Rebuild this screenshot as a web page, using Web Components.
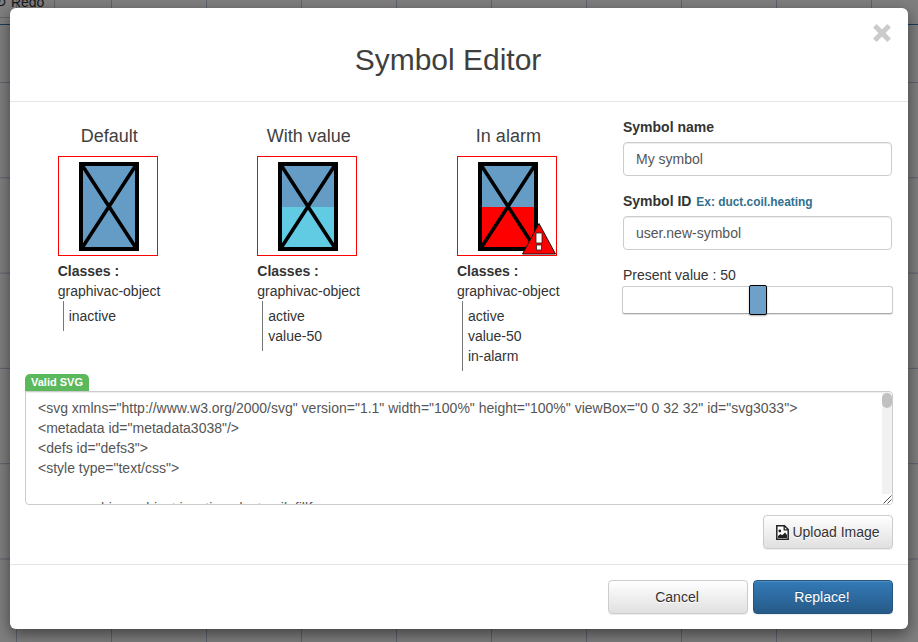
<!DOCTYPE html>
<html><head><meta charset="utf-8"><style>
html,body{margin:0;height:100%;overflow:hidden}
body{font:14px/20px "Liberation Sans",Arial,sans-serif;color:#333;background:#fff}
</style></head><body>
<template id="t-backdrop"><style>
:host{display:block;position:absolute;inset:0;overflow:hidden;background:#fff}
.bar{position:absolute;left:0;top:-14px;right:0;height:38px;border-bottom:1px solid #337ab7;font-size:14px}
.redo{position:absolute;left:-5px;top:0;border:1px solid #ccc;height:30px;line-height:30px;width:59px;border-left:0;white-space:nowrap}
.grid{position:absolute;inset:0;background-image:linear-gradient(to right,#b9c4e0 1px,transparent 1px),linear-gradient(to bottom,#b9c4e0 1px,transparent 1px);background-size:95px 95.3px;background-position:16px 82px}
.shade{position:absolute;inset:0;background:rgba(0,0,0,.5)}
</style><div class="grid"></div><div class="bar"><div class="redo">↻ Redo</div></div><div class="shade"></div></template>

<template id="t-modal"><style>
:host{display:flex;flex-direction:column;position:absolute;left:10px;top:8px;width:898px;height:621px;box-sizing:border-box;background:#fff;border-radius:6px;box-shadow:0 5px 15px rgba(0,0,0,.5)}
header{height:94px;box-sizing:border-box;border-bottom:1px solid #e5e5e5;display:flex;align-items:center;justify-content:center;position:relative;flex:none}
h3{margin:9px 22px 0 0;font-size:30px;font-weight:500;line-height:33px;color:#3f3f3f}
.close{position:absolute;right:17px;top:16px;opacity:.2}
.close svg{display:block;width:18px;height:18px}
main{flex:1;padding:15px;min-height:0}
footer{flex:none;height:65px;box-sizing:border-box;border-top:1px solid #e5e5e5;padding:15px;display:flex;justify-content:flex-end;gap:5px}
</style><header><h3>Symbol Editor</h3><div class="close" aria-hidden="true"><svg viewBox="0 0 18 18"><path d="M3.600 3.600 14.400 14.400M14.400 3.600 3.600 14.400" stroke="#000" stroke-width="5" stroke-linecap="square" fill="none"/></svg></div></header><main><slot></slot></main><footer><slot name="footer"></slot></footer></template>

<template id="t-preview"><style>
:host{display:block;width:100px;flex:none}
h4{margin:0 0 10px;padding:1px 0 0 3px;font-size:18px;font-weight:500;line-height:20px;text-align:center;white-space:nowrap;color:#3f3f3f}
.box{width:100px;height:100px;box-sizing:border-box;border:1px solid #f00;position:relative;overflow:hidden}
svg.sym{position:absolute;left:20px;top:5px;width:60px;height:89px;display:block}
svg.al{position:absolute;right:0;bottom:0;width:34px;height:32px;display:block}
.cl{margin-top:5px;white-space:nowrap}
b{font-weight:700;display:block}
.list{margin:0 0 0 5px;padding:5px 0 5px 5px;border-left:1px solid #777;white-space:nowrap;display:block}
</style><h4></h4><div class="box"><svg class="sym" viewBox="0 0 60 89"><rect x="2" y="2" width="56" height="85" fill="#659cc5"/><rect class="fill" x="2" y="45" width="56" height="42" fill="none"/><path d="M3 3 57 86M57 3 3 86" stroke="#000" stroke-width="3.6" fill="none"/><rect x="2" y="2" width="56" height="85" fill="none" stroke="#000" stroke-width="4"/></svg></div><div class="cl"><b>Classes :</b>graphivac-object<div class="list"><slot></slot></div></div></template>

<template id="t-field"><style>
:host{display:block;margin-bottom:15px}
label{display:block;font-weight:700;margin-bottom:4px;line-height:20px}
small{font-size:11.9px;font-weight:700;color:#31708f;margin-left:1px}
.in{height:34px;box-sizing:border-box;border:1px solid #ccc;border-radius:4px;box-shadow:inset 0 1px 1px rgba(0,0,0,.075);padding:6px 12px;line-height:20px;color:#555;background:#fff}
</style><label><span class="l"></span> <small></small></label><div class="in"></div></template>

<template id="t-slider"><style>
:host{display:block}
.lb{line-height:20px}
.track{position:relative;height:28px;margin:1px 0 0 -1px;width:271px;box-sizing:border-box;border:1px solid #ccc;border-bottom-color:#aaa;border-radius:3px;background:#fff;box-shadow:0 1px 1px rgba(0,0,0,.12)}
.thumb{position:absolute;left:126px;top:-2px;width:18px;height:30px;box-sizing:border-box;background:#6ea0c9;border:1px solid #000;border-radius:2px;box-shadow:0 1px 2px rgba(0,0,0,.3)}
</style><div class="lb">Present value : 50</div><div class="track"><div class="thumb"></div></div></template>

<template id="t-code"><style>
:host{display:block;position:relative;margin-top:3px}
.badge{display:block;width:fit-content;box-sizing:border-box;height:17px;padding:0 6px;line-height:16px;font-size:11px;font-weight:700;color:#fff;background:#5cb85c;border-radius:5px 5px 0 0}
.ta{height:114px;box-sizing:border-box;border:1px solid #ccc;border-radius:0 4px 4px 4px;padding:0 12px;position:relative;overflow:hidden;box-shadow:inset 0 1px 1px rgba(0,0,0,.075)}
pre{margin:0;padding-top:6px;font:inherit;color:#555;white-space:pre;line-height:20px}
.sb{position:absolute;top:0;right:0;width:10px;bottom:10px;background:#f1f1f1}
.th{position:absolute;left:0;top:1px;width:10px;height:15px;background:#c1c1c1;border-radius:5px}
.rz{position:absolute;right:0;bottom:0;width:10px;height:10px;background:#fff}
.rz svg{display:block}
</style><span class="badge">Valid SVG</span><div class="ta"><pre>&lt;svg xmlns="http://www.w3.org/2000/svg" version="1.1" width="100%" height="100%" viewBox="0 0 32 32" id="svg3033"&gt;
&lt;metadata id="metadata3038"/&gt;
&lt;defs id="defs3"&gt;
&lt;style type="text/css"&gt;

        .graphivac-object.inactive .duct-coil .fill{</pre><div class="sb"><div class="th"></div></div><div class="rz"><svg width="10" height="10" viewBox="0 0 10 10"><path d="M1.500 9.500 9.500 1.500M5.500 9.500 9.500 5.500" stroke="#555" fill="none"/></svg></div></div></template>

<template id="t-btn"><style>
:host{display:inline-block}
.b{display:flex;align-items:center;justify-content:center;gap:3px;box-sizing:border-box;height:34px;border:1px solid #ccc;border-radius:4px;background:linear-gradient(#fff,#e0e0e0);text-shadow:0 1px 0 #fff;box-shadow:inset 0 1px 0 rgba(255,255,255,.15),0 1px 1px rgba(0,0,0,.075);color:#333;white-space:nowrap}
:host([slot=footer]) .b{padding-right:2px}
:host([primary]) .b{background:linear-gradient(#337ab7,#265a88);border-color:#245580;color:#fff;text-shadow:0 -1px 0 rgba(0,0,0,.2)}
svg{display:block}
</style><div class="b"><slot name="icon"></slot><slot></slot></div></template>

<template id="t-columns"><style>
:host{display:flex;box-sizing:border-box;height:254px;padding-top:8px;align-items:flex-start}
.prev{display:flex;margin-left:32.7px;gap:99.6px;width:550px;flex:none}
.form{margin-left:15.3px;width:269px;flex:none;margin-top:-8px}
</style><div class="prev"><slot name="prev"></slot></div><div class="form"><slot name="form"></slot></div></template>

<template id="t-upload"><style>
:host{display:flex;justify-content:flex-end;margin-top:10px}
</style><slot></slot></template>

<script>
function def(name,tid,init){customElements.define(name,class extends HTMLElement{
  constructor(){super();const r=this.attachShadow({mode:'open'});r.appendChild(document.getElementById(tid).content.cloneNode(true));}
  connectedCallback(){if(init)init(this,this.shadowRoot)}
});}
def('app-backdrop','t-backdrop');
def('modal-box','t-modal');
def('symbol-columns','t-columns');
def('upload-row','t-upload');
def('symbol-preview','t-preview',(h,r)=>{
  r.querySelector('h4').textContent=h.getAttribute('title-text');
  const f=h.getAttribute('fill');
  if(f)r.querySelector('.fill').setAttribute('fill',f);
  if(h.hasAttribute('alarm')){
    const NS='http://www.w3.org/2000/svg';const s=document.createElementNS(NS,'svg');
    s.setAttribute('class','al');s.setAttribute('viewBox','0 0 34 32');
    s.innerHTML='<path d="M17 .5 33.500 31H.5Z" fill="#f00" stroke="#111" stroke-width="1" stroke-linejoin="round"/><path d="M14 10h6v10h-6zM14.500 22h5v5h-5z" fill="#fff" stroke="#222" stroke-width=".8"/>';
    r.querySelector('.box').appendChild(s);
  }
});
def('text-field','t-field',(h,r)=>{
  r.querySelector('.l').textContent=h.getAttribute('label');
  const hint=h.getAttribute('hint');
  if(hint)r.querySelector('small').textContent=hint;
  r.querySelector('.in').textContent=h.getAttribute('value');
});
def('value-slider','t-slider');
def('code-area','t-code');
def('ui-btn','t-btn',(h,r)=>{const w=h.getAttribute('w');if(w)r.querySelector('.b').style.width=w+'px';});
</script>

<app-backdrop></app-backdrop>
<modal-box>
  <symbol-columns>
    <symbol-preview slot="prev" title-text="Default">inactive</symbol-preview>
    <symbol-preview slot="prev" title-text="With value" fill="#62cbe4">active<br>value-50</symbol-preview>
    <symbol-preview slot="prev" title-text="In alarm" fill="#f00" alarm>active<br>value-50<br>in-alarm</symbol-preview>
    <div slot="form">
      <text-field label="Symbol name" value="My symbol"></text-field>
      <text-field label="Symbol ID" hint="Ex: duct.coil.heating" value="user.new-symbol"></text-field>
      <value-slider></value-slider>
    </div>
  </symbol-columns>
  <code-area></code-area>
  <upload-row><ui-btn w="130"><svg slot="icon" width="13" height="15" viewBox="0 0 13 15"><path d="M.8.8h7.700l3.700 3.700v9.700H.8Z" fill="#fff" stroke="#222" stroke-width="1.5"/><path d="M8.200.8v4h4" fill="none" stroke="#222" stroke-width="1.300"/><circle cx="3.800" cy="6" r="1.400" fill="#222"/><path d="M2 13v-2l2.500-2 1.700 1.300L9 7.500l2 2.500v3Z" fill="#222"/></svg>Upload Image</ui-btn></upload-row>
  <ui-btn slot="footer" w="140">Cancel</ui-btn>
  <ui-btn slot="footer" w="140" primary>Replace!</ui-btn>
</modal-box>
</body></html>
